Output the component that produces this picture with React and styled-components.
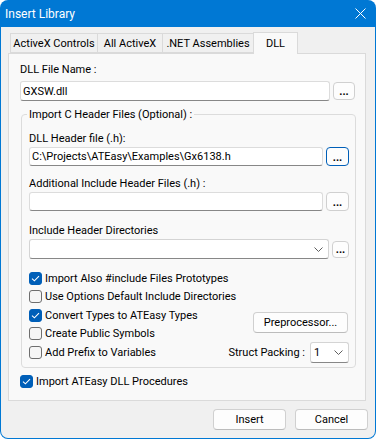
import React, { useState } from 'react';
import styled, { createGlobalStyle } from 'styled-components';

const GlobalStyle = createGlobalStyle`
  html, body {
    margin: 0;
    padding: 0;
    background: #fff;
  }
  body {
    font-family: Roboto, "Liberation Sans", sans-serif;
    font-size: 11px;
    color: #000;
  }
  * {
    box-sizing: border-box;
  }
`;

const Window = styled.div`
  width: 376px;
  height: 439px;
  display: flex;
  flex-direction: column;
  padding: 0 1px 1px;
  background: #0078d4;
  border-radius: 8px;
  overflow: hidden;
`;

const TitleBar = styled.div`
  height: 27px;
  flex: none;
  display: flex;
  align-items: center;
  justify-content: space-between;
  padding: 0 9px 0 4px;
  color: #fff;
  font-size: 12px;
`;

const Body = styled.div`
  flex: 1;
  display: flex;
  flex-direction: column;
  padding: 0 9px 8px 7px;
  background: #f0f0f0;
  border-radius: 0 0 7px 7px;
`;

const TabStrip = styled.div`
  display: flex;
  align-items: flex-end;
  padding: 5px 0 0 2px;
`;

const Tab = styled.div`
  position: relative;
  z-index: ${p => (p.$active ? 1 : 0)};
  width: ${p => p.$width}px;
  height: ${p => (p.$active ? 22 : 20)}px;
  margin-left: ${p => (p.$first ? 0 : -1)}px;
  margin-bottom: ${p => (p.$active ? -1 : 0)}px;
  display: flex;
  align-items: center;
  justify-content: center;
  background: ${p => (p.$active ? '#f9f9f9' : '#f0f0f0')};
  border: 1px solid #dadada;
  border-bottom: ${p => (p.$active ? 'none' : '1px solid #dadada')};
  line-height: 15px;
`;

const Panel = styled.div`
  flex: 1;
  display: flex;
  flex-direction: column;
  padding: 8px 10px 0 11px;
  background: #f9f9f9;
  border: 1px solid #dadada;
`;

const Field = styled.div`
  display: flex;
  flex-direction: column;
  gap: ${p => p.$gap ?? 1}px;
  margin-top: ${p => p.$top || 0}px;
`;

const Label = styled.div`
  line-height: 15px;
  white-space: nowrap;
`;

const InputRow = styled.div`
  display: flex;
  align-items: center;
  gap: 3px;
`;

const TextBox = styled.input`
  flex: 1;
  min-width: 0;
  height: ${p => p.$height || 20}px;
  padding: 0 2px;
  font: inherit;
  color: #000;
  background: #fff;
  border: 1px solid #dcdcdc;
  border-bottom-color: #878787;
  border-radius: 3px;
  outline: none;
`;

const Combo = styled.div`
  flex: ${p => (p.$width ? 'none' : 1)};
  width: ${p => (p.$width ? `${p.$width}px` : 'auto')};
  height: ${p => p.$height || 20}px;
  display: flex;
  align-items: center;
  justify-content: space-between;
  padding: 0 5px 0 3px;
  background: #fff;
  border: 1px solid #d4d4d4;
  border-bottom-color: #878787;
  border-radius: 3px;
`;

const Browse = styled.button`
  flex: none;
  width: ${p => p.$width || 23}px;
  height: ${p => p.$height || 19}px;
  padding: 0 0 2px;
  font: inherit;
  font-weight: 700;
  line-height: 10px;
  color: #000;
  background: #fdfdfd;
  border: ${p => (p.$focused ? '1.5px solid #005fb8' : '1px solid #d0d0d0')};
  border-radius: 4px;
  display: flex;
  align-items: flex-end;
  justify-content: center;
`;

const Group = styled.fieldset`
  min-width: 0;
  margin: 6px -1px 0 1px;
  padding: 9px 6px 5px 7px;
  border: 1px solid #dcdcdc;
  border-radius: 4px;
`;

const Legend = styled.legend`
  margin-left: -2px;
  padding: 0 2px;
  line-height: 15px;
`;

const Options = styled.div`
  display: grid;
  grid-template-columns: minmax(0, 1fr) auto;
  grid-auto-rows: 18.5px;
  margin-top: 10px;
`;

const CheckRow = styled.label`
  grid-column: 1;
  height: 18.5px;
  display: flex;
  align-items: center;
  gap: 3px;
  margin-top: ${p => p.$top || 0}px;
  white-space: nowrap;
`;

const Box = styled.span`
  width: 13px;
  height: 13px;
  flex: none;
  display: flex;
  align-items: center;
  justify-content: center;
  background: ${p => (p.$checked ? '#005fb8' : '#f6f6f6')};
  border: 1px solid ${p => (p.$checked ? '#005fb8' : '#6e6e6e')};
  border-radius: 3px;
`;

const PushButton = styled.button`
  width: ${p => p.$width || 73}px;
  height: 21px;
  padding: 0;
  font: inherit;
  color: #000;
  background: #fdfdfd;
  border: 1px solid #d0d0d0;
  border-bottom-color: #bcbcbc;
  border-radius: 4px;
`;

const PreprocessorButton = styled(PushButton)`
  grid-column: 2;
  grid-row: 3 / span 2;
  justify-self: end;
  align-self: start;
  margin: 6px 1px 0 0;
`;

const StructRow = styled.div`
  grid-column: 2;
  grid-row: 5;
  justify-self: end;
  align-self: center;
  display: flex;
  align-items: center;
  gap: 5px;
  white-space: nowrap;
`;

const Footer = styled.div`
  display: flex;
  justify-content: flex-end;
  gap: 9px;
  margin: 8px -2px 0 0;
`;

const TABS = [
  { label: 'ActiveX Controls', width: 88 },
  { label: 'All ActiveX', width: 66 },
  { label: '.NET Assemblies', width: 92 },
  { label: 'DLL', width: 45, active: true },
];

const Chevron = () => (
  <svg width="9" height="5" viewBox="0 0 9 5">
    <polyline points="0.5,0.5 4.5,4.5 8.5,0.5" fill="none" stroke="#5f5f5f" strokeWidth="1" />
  </svg>
);

const CloseIcon = () => (
  <svg width="11" height="11" viewBox="0 0 11 11">
    <path d="M0.5 0.5L10.5 10.5M10.5 0.5L0.5 10.5" stroke="#fff" strokeWidth="1" />
  </svg>
);

function Check({ checked, onToggle, label, top }) {
  return (
    <CheckRow $top={top} onClick={onToggle}>
      <Box $checked={checked}>
        {checked && (
          <svg width="9" height="7" viewBox="0 0 9 7">
            <polyline points="1,3.6 3.4,5.8 8,1.2" fill="none" stroke="#fff" strokeWidth="1.1" />
          </svg>
        )}
      </Box>
      {label}
    </CheckRow>
  );
}

export default function App() {
  const [checks, setChecks] = useState({
    includes: true,
    defaults: false,
    convert: true,
    publicSyms: false,
    prefix: false,
    importProcs: true,
  });

  const toggle = key => () => setChecks(c => ({ ...c, [key]: !c[key] }));

  return (
    <>
      <GlobalStyle />
      <Window>
        <TitleBar>
          <span>Insert Library</span>
          <CloseIcon />
        </TitleBar>
        <Body>
          <TabStrip>
            {TABS.map((t, i) => (
              <Tab key={t.label} $width={t.width} $active={t.active} $first={i === 0}>
                {t.label}
              </Tab>
            ))}
          </TabStrip>
          <Panel>
            <Field $gap={4}>
              <Label>DLL File Name :</Label>
              <InputRow>
                <TextBox readOnly defaultValue="GXSW.dll" />
                <Browse $width={22} $height={18}>...</Browse>
              </InputRow>
            </Field>

            <Group>
              <Legend>Import C Header Files (Optional) :</Legend>
              <Field>
                <Label>DLL Header file (.h):</Label>
                <InputRow>
                  <TextBox $height={19} readOnly defaultValue="C:\Projects\ATEasy\Examples\Gx6138.h" />
                  <Browse $focused>...</Browse>
                </InputRow>
              </Field>
              <Field $top={10}>
                <Label>Additional Include Header Files (.h) :</Label>
                <InputRow>
                  <TextBox $height={19} readOnly defaultValue="" />
                  <Browse>...</Browse>
                </InputRow>
              </Field>
              <Field $top={12}>
                <Label>Include Header Directories</Label>
                <InputRow>
                  <Combo>
                    <span />
                    <Chevron />
                  </Combo>
                  <Browse $width={17} $height={17}>...</Browse>
                </InputRow>
              </Field>

              <Options>
                <Check checked={checks.includes} onToggle={toggle('includes')} label="Import Also #include Files Prototypes" />
                <Check checked={checks.defaults} onToggle={toggle('defaults')} label="Use Options Default Include Directories" />
                <Check checked={checks.convert} onToggle={toggle('convert')} label="Convert Types to ATEasy Types" />
                <Check checked={checks.publicSyms} onToggle={toggle('publicSyms')} label="Create Public Symbols" />
                <Check checked={checks.prefix} onToggle={toggle('prefix')} label="Add Prefix to Variables" />
                <PreprocessorButton $width={95}>Preprocessor...</PreprocessorButton>
                <StructRow>
                  <span>Struct Packing :</span>
                  <Combo $width={39} $height={21}>
                    <span>1</span>
                    <Chevron />
                  </Combo>
                </StructRow>
              </Options>
            </Group>

            <Check
              top={5}
              checked={checks.importProcs}
              onToggle={toggle('importProcs')}
              label="Import ATEasy DLL Procedures"
            />
          </Panel>
          <Footer>
            <PushButton>Insert</PushButton>
            <PushButton>Cancel</PushButton>
          </Footer>
        </Body>
      </Window>
    </>
  );
}
